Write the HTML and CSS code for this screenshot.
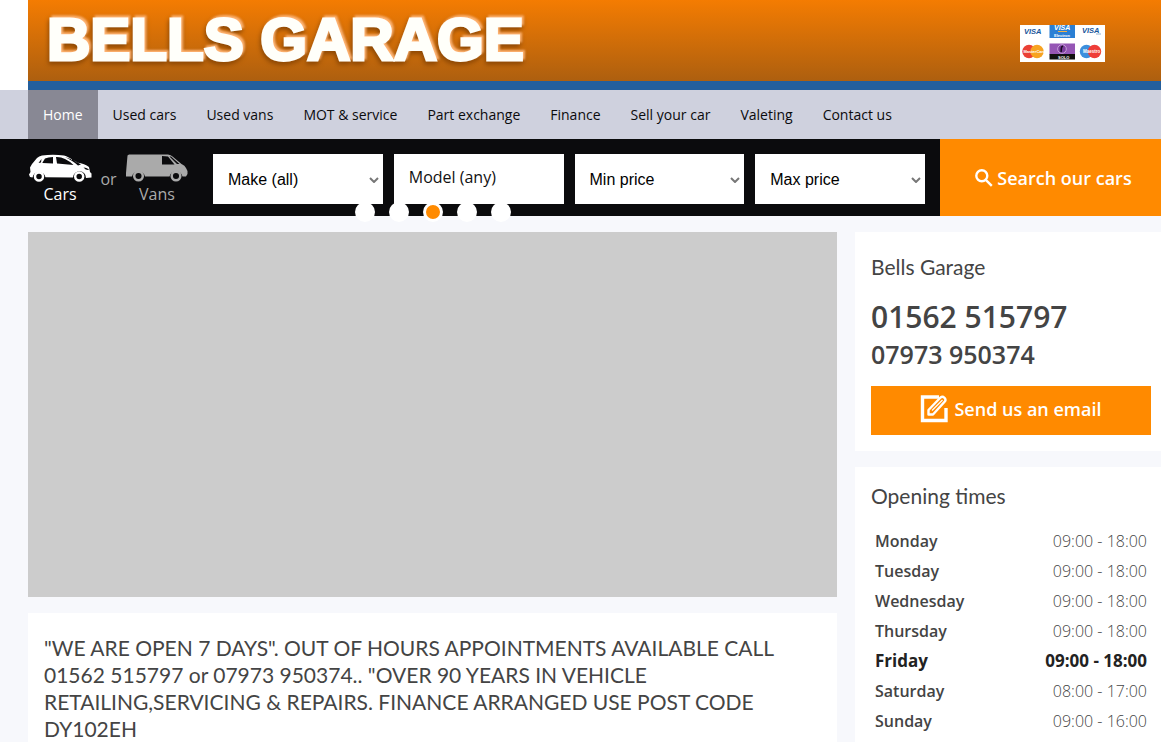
FILE: index.html
```html
<!DOCTYPE html>
<html lang="en">
<head>
<meta charset="utf-8">
<title>Bells Garage</title>
<link rel="stylesheet" href="styles.css">
</head>
<body>
<header class="banner-wrap">
  <div class="banner">
    <a class="logo" href="#">BELLS GARAGE</a>
    <svg class="cards" viewBox="0 0 85 37" role="img" aria-label="Accepted cards">
      <rect width="85" height="37" fill="#fff"/>
      <g font-family="Liberation Sans" font-weight="bold" font-style="italic" font-size="7.5" fill="#17569b">
        <text x="4" y="8.5">VISA</text>
        <text x="62" y="7.5">VISA</text>
      </g>
      <path d="M76 9h5" stroke="#8fb0d0"/>
      <rect x="29.500" width="25.500" height="13" fill="#2a7fd4"/>
      <text x="34" y="5" font-family="Liberation Sans" font-weight="bold" font-style="italic" font-size="7" fill="#fff">VISA</text>
      <path d="M38 6.500h9" stroke="#f0b24a"/>
      <text x="34" y="11.500" font-family="Liberation Sans" font-weight="bold" font-size="4" fill="#fff">Electron</text>
      <circle cx="9" cy="26.500" r="6.700" fill="#ea4035"/>
      <circle cx="17" cy="26.500" r="6.700" fill="#f7a321"/>
      <text x="3.500" y="28" font-family="Liberation Sans" font-weight="bold" font-size="4" fill="#fff">MasterCard</text>
      <rect x="29.500" y="18.500" width="25.500" height="11" fill="#9556b5"/>
      <rect x="29.500" y="29" width="25.500" height="5.500" fill="#111"/>
      <circle cx="42" cy="24" r="4.300" fill="#7a3c9c" stroke="#c9a2dc"/>
      <path d="M43 21c-3 1-1 3-2 6" stroke="#1b0b24" stroke-width="1.600" fill="none"/>
      <text x="38" y="33.500" font-family="Liberation Sans" font-weight="bold" font-size="4" fill="#fff">SOLO</text>
      <circle cx="66.500" cy="26.500" r="6.700" fill="#3c8fdd"/>
      <circle cx="74.500" cy="26.500" r="6.700" fill="#ef3d38"/>
      <text x="63" y="28" font-family="Liberation Sans" font-weight="bold" font-size="4.500" fill="#fff">Maestro</text>
    </svg>
  </div>
</header>

<nav class="nav">
  <a class="nav-link active" href="#">Home</a>
  <a class="nav-link" href="#">Used cars</a>
  <a class="nav-link" href="#">Used vans</a>
  <a class="nav-link" href="#">MOT &amp; service</a>
  <a class="nav-link" href="#">Part exchange</a>
  <a class="nav-link" href="#">Finance</a>
  <a class="nav-link" href="#">Sell your car</a>
  <a class="nav-link" href="#">Valeting</a>
  <a class="nav-link" href="#">Contact us</a>
</nav>

<form class="search">
  <div class="types">
    <button class="type selected" type="button">
      <svg viewBox="0 0 64 28" aria-hidden="true">
        <path fill="currentColor" fill-rule="evenodd" d="M1 20.500L2.500 18L2 13.500L4 10L9 4Q11 2 14 1.500Q25 0 36 1.500Q40 2.500 49 8.500Q57 9.500 61 13L62 18L63.500 19.500V23.500L58 24A6.500 6.500 0 0 0 45 23.500L17.500 23.200A6.700 6.700 0 0 0 4.500 23.500L2 23ZM14.500 8.500L17 4.500Q20 3 25 3V9.500L14.500 9ZM28 3Q33 2.800 37 5Q43 8 45.500 11L29 9.500ZM10.500 9L13.500 5L13 8.500ZM37 3Q46 7.500 50 11.500L53 10.500Q46 5.500 37 3ZM55.500 13.500Q58 16.500 61 16Q59.500 13.500 55.500 13.500Z"/>
        <circle cx="11" cy="22.500" r="4" fill="none" stroke="currentColor" stroke-width="2.500"/>
        <circle cx="51.200" cy="22.500" r="4" fill="none" stroke="currentColor" stroke-width="2.500"/>
      </svg>
      <span>Cars</span>
    </button>
    <span class="or">or</span>
    <button class="type" type="button">
      <svg viewBox="0 0 64 28" aria-hidden="true">
        <path fill="currentColor" fill-rule="evenodd" d="M2.500 1.500L4 .5H43Q46 1 47.500 2.500L56.500 10Q60 11.500 61 14L62.500 17V20L61 22.500H57.500A6.700 6.700 0 0 0 44.500 22.500H20A6.700 6.700 0 0 0 7 22.500H1V19L1.500 13ZM37 2V10.500H49.500L43 2.500ZM44.500 2.500L52 10H54.500L46 2.500Z"/>
        <circle cx="13.500" cy="22" r="4.300" fill="none" stroke="currentColor" stroke-width="2.500"/>
        <circle cx="51" cy="22" r="4.300" fill="none" stroke="currentColor" stroke-width="2.500"/>
      </svg>
      <span>Vans</span>
    </button>
  </div>
  <div class="fields">
    <div class="field">
      <select aria-label="Make"><option>Make (all)</option></select>
      <svg class="chev" viewBox="0 0 10 6" aria-hidden="true"><path d="M1 1l4 4 4-4"/></svg>
    </div>
    <button class="model" type="button" aria-haspopup="listbox">Model (any)</button>
    <div class="field">
      <select aria-label="Minimum price"><option>Min price</option></select>
      <svg class="chev" viewBox="0 0 10 6" aria-hidden="true"><path d="M1 1l4 4 4-4"/></svg>
    </div>
    <div class="field">
      <select aria-label="Maximum price"><option>Max price</option></select>
      <svg class="chev" viewBox="0 0 10 6" aria-hidden="true"><path d="M1 1l4 4 4-4"/></svg>
    </div>
  </div>
  <button class="submit" type="submit">
    <svg viewBox="0 0 18 18" aria-hidden="true"><circle cx="6.800" cy="6.800" r="5.500"/><path d="M10.800 10.800l6 6"/></svg>
    <span>Search our cars</span>
  </button>
</form>

<div class="page">
  <main class="main">
    <section class="carousel" aria-label="Featured">
      <div class="dots">
        <button class="dot" type="button" aria-label="Slide 1"></button>
        <button class="dot" type="button" aria-label="Slide 2"></button>
        <button class="dot current" type="button" aria-label="Slide 3"></button>
        <button class="dot" type="button" aria-label="Slide 4"></button>
        <button class="dot" type="button" aria-label="Slide 5"></button>
      </div>
    </section>
    <section class="panel intro">
      <h1>"WE ARE OPEN 7 DAYS". OUT OF HOURS APPOINTMENTS AVAILABLE CALL 01562 515797 or 07973 950374.. "OVER 90 YEARS IN VEHICLE RETAILING,SERVICING &amp; REPAIRS. FINANCE ARRANGED USE POST CODE DY102EH</h1>
    </section>
  </main>
  <aside class="side">
    <section class="panel contact">
      <h2>Bells Garage</h2>
      <a class="phone" href="tel:01562515797">01562 515797</a>
      <a class="phone mobile" href="tel:07973950374">07973 950374</a>
      <a class="email" href="#">
        <svg viewBox="0 0 28 28" aria-hidden="true">
          <path d="M19 2H2.500v23.500H26V13" fill="none" stroke="#fff" stroke-width="3.400"/>
          <path d="M8.500 19.500V15L20.500 2.500q2-1.500 4 .3 1.800 2 .3 3.700L13 19.500Z" fill="none" stroke="#fff" stroke-width="2.400" stroke-linejoin="round"/>
          <path d="M12 15.500L22.500 5" stroke="#fff" stroke-width="1.200"/>
        </svg>
        <span>Send us an email</span>
      </a>
    </section>
    <section class="panel hours">
      <h2>Opening times</h2>
      <table>
        <tr><th scope="row">Monday</th><td>09:00 - 18:00</td></tr>
        <tr><th scope="row">Tuesday</th><td>09:00 - 18:00</td></tr>
        <tr><th scope="row">Wednesday</th><td>09:00 - 18:00</td></tr>
        <tr><th scope="row">Thursday</th><td>09:00 - 18:00</td></tr>
        <tr class="today"><th scope="row">Friday</th><td>09:00 - 18:00</td></tr>
        <tr><th scope="row">Saturday</th><td>08:00 - 17:00</td></tr>
        <tr><th scope="row">Sunday</th><td>09:00 - 16:00</td></tr>
      </table>
    </section>
  </aside>
</div>
</body>
</html>
```
FILE: styles.css
```css
* { box-sizing: border-box; }
html { overflow: hidden; }
body {
  margin: 0;
  background: #f7f8fc;
  color: #444;
  font-family: "Open Sans", sans-serif;
  font-size: 16px;
}
a { color: inherit; text-decoration: none; }
button { border: 0; padding: 0; background: none; color: inherit; font: inherit; cursor: pointer; }

.banner-wrap { padding-left: 28px; background: #fff; }
.banner {
  display: flex;
  justify-content: space-between;
  align-items: center;
  height: 90px;
  padding: 0 56px 3px 19px;
  border-bottom: 9px solid #235f9d;
  background: linear-gradient(#f47c02, #ad5f0f);
}
.logo {
  padding-top: 2px;
  color: #fffffa;
  font: bold 60px/80px "Liberation Sans", sans-serif;
  -webkit-text-stroke: 3px #fffffa;
  filter: drop-shadow(2px -2px 1px #ffb473) drop-shadow(-1px 3px 2px #8d4804);
}
.cards { width: 85px; height: 37px; margin-top: 8px; }

.nav { display: flex; padding-left: 28px; background: #cfd1de; }
.nav-link { padding: 0 15px; color: #0b0b0d; font-size: 14px; line-height: 49px; }
.nav-link.active { background: #888894; color: #fff; }

.search { display: flex; background: #0b0b0d; }
.types { display: flex; width: 213px; padding: 15px 0 0 28px; color: #aaa; }
.type { display: flex; flex-direction: column; align-items: center; width: 64px; line-height: 24px; }
.type svg { display: block; width: 64px; height: 28px; }
.type.selected { color: #fff; }
.or { width: 33px; text-align: center; line-height: 50px; }
.fields { flex: 1; display: grid; grid-template-columns: repeat(4, 1fr); gap: 11px; padding: 15px 15px 12px 0; }
.field { position: relative; }
.field select {
  appearance: none;
  display: block;
  width: 100%;
  height: 50px;
  padding: 0 15px;
  border: 0;
  border-radius: 0;
  background: #fff;
  color: #000;
  font: 16px "Liberation Sans", sans-serif;
}
.chev { position: absolute; right: 4px; top: 23px; width: 10px; height: 6px; fill: none; stroke: #777; stroke-width: 2; pointer-events: none; }
.model { height: 50px; padding: 0 15px 4px; background: #fff; color: #111; text-align: left; }
.submit { display: flex; justify-content: center; align-items: center; gap: 4px; width: 221px; padding-left: 6px; background: #ff8a00; color: #fff; font-size: 18px; font-weight: 600; }
.submit svg { width: 18px; height: 18px; fill: none; stroke: #fff; stroke-width: 2.4; }

.page { display: grid; grid-template-columns: 1fr 306px; gap: 18px; padding: 16px 0 0 28px; }
.panel { background: #fff; }
.carousel { position: relative; height: 365px; margin-bottom: 16px; background: #ccc; }
.dots { position: absolute; top: -30px; left: 0; right: 0; display: flex; justify-content: center; gap: 14px; }
.dot { width: 20px; height: 20px; border: 3px solid #fff; border-radius: 50%; background: #fff; }
.dot.current { background: #ff8a00; }
.intro { padding: 21px 16px; }
h1, h2 { margin: 0; font-family: Lato, sans-serif; font-weight: 400; font-size: 21px; line-height: 27px; }

.contact { padding: 21px 10px 16px 16px; margin-bottom: 16px; }
.phone { display: block; margin-top: 17px; font-size: 30px; font-weight: 600; line-height: 40px; }
.phone.mobile { margin: 0 0 15px; font-size: 25px; line-height: 34px; }
.email { display: flex; justify-content: center; align-items: center; gap: 6px; height: 49px; padding-bottom: 3px; background: #ff8a00; color: #fff; font-size: 18px; font-weight: 600; }
.email svg { width: 28px; height: 28px; }

.hours { padding: 15px 10px 16px 16px; }
table { width: 100%; margin-top: 17px; border-collapse: collapse; }
th, td { padding: 0 4px; line-height: 30px; }
th { text-align: left; font-weight: 600; }
td { text-align: right; font-weight: 300; }
.today th, .today td { color: #222; font-size: 17px; font-weight: 700; }
```
